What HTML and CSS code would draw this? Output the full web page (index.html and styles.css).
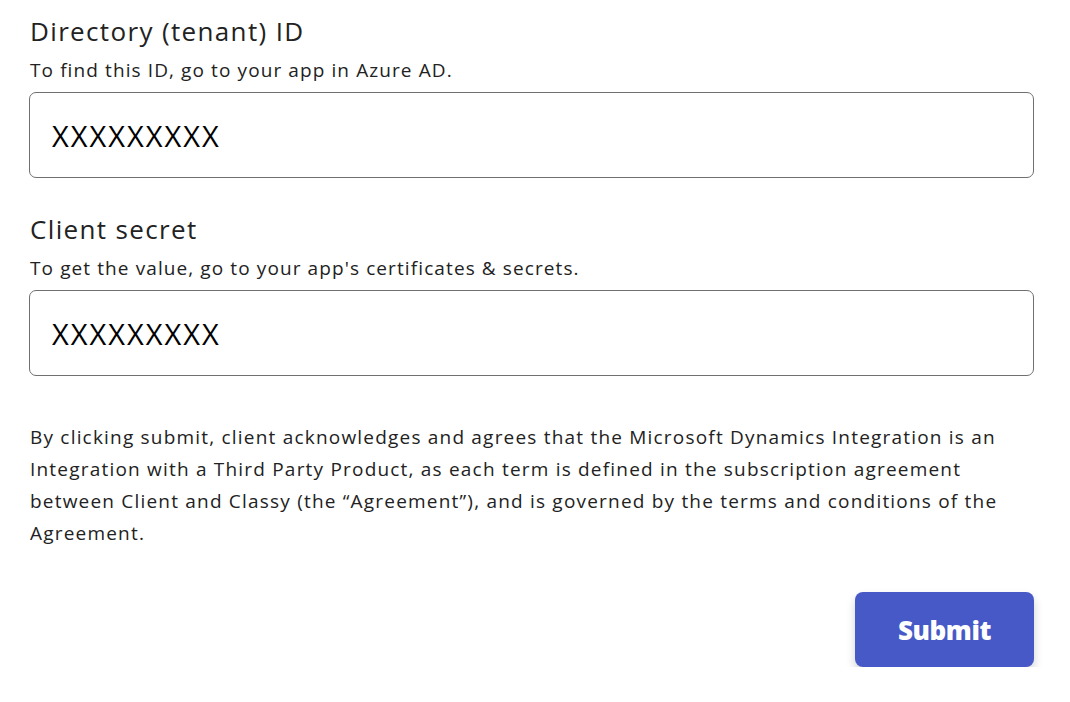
FILE: index.html
```html
<!DOCTYPE html>
<html lang="en">
<head>
<meta charset="utf-8">
<title>Microsoft Dynamics Integration</title>
<link rel="stylesheet" href="styles.css">
</head>
<body>
<form class="form">
  <div class="field">
    <label class="field-label" for="tenant">Directory (tenant) ID</label>
    <div class="field-help">To find this ID, go to your app in Azure AD.</div>
    <input class="field-input" id="tenant" type="text" value="XXXXXXXXX">
  </div>
  <div class="field">
    <label class="field-label" for="secret">Client secret</label>
    <div class="field-help">To get the value, go to your app's certificates &amp; secrets.</div>
    <input class="field-input" id="secret" type="text" value="XXXXXXXXX">
  </div>
  <p class="legal">By clicking submit, client acknowledges and agrees that the Microsoft Dynamics Integration is an Integration with a Third Party Product, as each term is defined in the subscription agreement between Client and Classy (the “Agreement”), and is governed by the terms and conditions of the Agreement.</p>
  <div class="actions">
    <button class="submit" type="button">Submit</button>
  </div>
</form>
</body>
</html>
```

FILE: styles.css
```css
html, body {
  margin: 0;
  padding: 0;
  background: #ffffff;
}
body {
  font-family: "Open Sans", "Noto Sans", sans-serif;
  color: #222222;
}
.form {
  display: flex;
  flex-direction: column;
  width: 1005px;
  margin-left: 29px;
  padding-top: 13px;
}
.field {
  display: flex;
  flex-direction: column;
  margin-bottom: 33px;
}
.field-label {
  font-size: 26px;
  line-height: 36px;
  letter-spacing: 1.35px;
  padding-left: 1px;
  color: #222222;
}
.field-help {
  font-size: 19px;
  line-height: 26px;
  letter-spacing: 1.1px;
  margin-top: 8px;
  padding-left: 1px;
  color: #222222;
}
.field-input {
  box-sizing: border-box;
  margin-top: 9px;
  height: 86px;
  width: 1005px;
  border: 1px solid #707070;
  border-radius: 7px;
  padding: 0 22px;
  font-family: "Open Sans", "Noto Sans", sans-serif;
  font-size: 29px;
  letter-spacing: 2px;
  color: #000000;
  background: #ffffff;
  outline: none;
}
.legal {
  width: 1004px;
  margin: 12px 0 0 1px;
  font-size: 19px;
  line-height: 32px;
  letter-spacing: 1.2px;
  color: #222222;
}
.actions {
  display: flex;
  justify-content: flex-end;
  margin-top: 43px;
}
.submit {
  width: 179px;
  height: 75px;
  border: none;
  border-radius: 8px;
  background: #4659c6;
  color: #ffffff;
  font-family: "Open Sans", "Noto Sans", sans-serif;
  font-weight: 800;
  font-size: 26px;
  letter-spacing: -0.4px;
  box-shadow: 0 5px 10px rgba(0, 0, 0, 0.18);
  cursor: pointer;
}
```
